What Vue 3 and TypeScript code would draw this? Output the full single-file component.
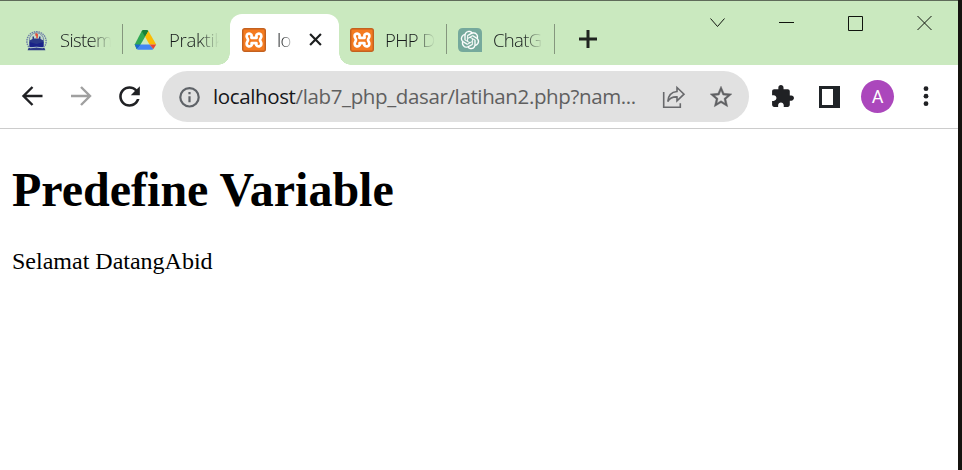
<script setup lang="ts">
type Icon = 'campus' | 'drive' | 'xampp' | 'chat'
interface Tab {
  title: string
  icon: Icon
  active?: boolean
  separator?: boolean
}

const tabs: Tab[] = [
  { title: 'Sistem', icon: 'campus', separator: true },
  { title: 'Praktik', icon: 'drive' },
  { title: 'lo', icon: 'xampp', active: true },
  { title: 'PHP D', icon: 'xampp', separator: true },
  { title: 'ChatG', icon: 'chat', separator: true },
]
</script>

<template>
  <div class="screen">
    <div class="window">
      <header class="strip">
        <div class="tabs">
          <div v-for="(tab, i) in tabs" :key="i" class="tab" :class="{ active: tab.active, separator: tab.separator }">
            <svg v-if="tab.icon === 'campus'" class="favicon" viewBox="0 0 24 24">
              <path d="M2.800 19A9.600 9.600 0 1 1 18.200 19" fill="none" stroke="#6878a8" stroke-width="1.400" stroke-dasharray="1.500 .8" />
              <circle cx="10.500" cy="12" r="7.200" fill="#c3dcc9" stroke="#6676a5" stroke-width=".8" />
              <path d="M3.500 12.500l3-1.500V8.500h1.500v2h5v-2h1.500V11l3 1.500v6h-14z" fill="#2a3888" />
              <path d="M9.800 4.800l2.300 1.500-.3 4h-1.600V8l-1.200-.8z" fill="#e0523f" />
              <path d="M3.500 14l7 2 7-2v5h-14z" fill="#1a2389" />
              <path d="M2.500 20q8-2 16 0l.9 2.200H1.600z" fill="#2c3a86" />
              <path d="M4 19.800q6.500-1.200 13 0" fill="none" stroke="#b9cfd0" stroke-width=".9" />
            </svg>
            <svg v-else-if="tab.icon === 'drive'" class="favicon" viewBox="0 0 24 24">
              <path d="M7.700 2.900h6.700L11.100 8.700 4.700 19.800 2.600 21.300.700 16.500z" fill="#30a853" />
              <path d="M7.700 2.900q.5-1 1.500-1h3.700q1 0 1.500 1l-3.300 5.800z" fill="#188038" />
              <path d="M14.400 2.900l7.800 13.600h-6.700L11.100 8.700z" fill="#fbbc04" />
              <path d="M6.600 16.500h8.900l3.900 4.600q-.5.600-1.400.6H4.200q-.9 0-1.500-.6z" fill="#4285f4" />
              <path d="M.700 16.500h5.900l-3.900 4.600z" fill="#1967d2" />
              <path d="M15.500 16.500h6.700l-2.800 4.600z" fill="#ea4335" />
            </svg>
            <svg v-else-if="tab.icon === 'xampp'" class="favicon" viewBox="0 0 24 24">
              <rect x=".7" y=".7" width="22.600" height="22.600" rx="2" fill="#f47b20" stroke="#c4611f" stroke-width="1.400" />
              <path d="M9.300 6.600C7.600 4.700 4.300 5.600 4.700 8.600 4.900 9.900 5.900 10.500 6 12 5.900 13.200 4.700 14 4.700 15.600 4.600 18.700 8.200 19.200 9.600 17.300V15.200H14.400V17.300C15.800 19.200 19.400 18.700 19.300 15.600 19.300 14 18.100 13.200 18 12 18.100 10.500 19.100 9.900 19.300 8.600 19.700 5.600 16.400 4.700 14.700 6.600 14 7.500 14.600 8.600 14.600 9.800H9.400C9.400 8.600 10 7.500 9.300 6.600Z" fill="none" stroke="#fff" stroke-width="2.700" stroke-linejoin="round" />
            </svg>
            <svg v-else class="favicon" viewBox="0 0 24 24">
              <path d="M5 0h14q5 0 5 5v19H5q-5 0-5-5V5q0-5 5-5z" fill="#75a99c" />
              <path transform="translate(2.800 2.800) scale(.765)" fill="#fff" stroke="#fff" stroke-width=".25" d="M22.2819 9.8211a5.9847 5.9847 0 0 0-.5157-4.9108 6.0462 6.0462 0 0 0-6.5098-2.9A6.0651 6.0651 0 0 0 4.9807 4.1818a5.9847 5.9847 0 0 0-3.9977 2.9 6.0462 6.0462 0 0 0 .7427 7.0966 5.98 5.98 0 0 0 .511 4.9107 6.051 6.051 0 0 0 6.5146 2.9001A5.9847 5.9847 0 0 0 13.2599 24a6.0557 6.0557 0 0 0 5.7718-4.2058 5.9894 5.9894 0 0 0 3.9977-2.9001 6.0557 6.0557 0 0 0-.7475-7.0729zm-9.022 12.6081a4.4755 4.4755 0 0 1-2.8764-1.0408l.1419-.0804 4.7783-2.7582a.7948.7948 0 0 0 .3927-.6813v-6.7369l2.02 1.1686a.071.071 0 0 1 .038.052v5.5826a4.504 4.504 0 0 1-4.4945 4.4944zm-9.6607-4.1254a4.4708 4.4708 0 0 1-.5346-3.0137l.142.0852 4.783 2.7582a.7712.7712 0 0 0 .7806 0l5.8428-3.3685v2.3324a.0804.0804 0 0 1-.0332.0615L9.74 19.9502a4.4992 4.4992 0 0 1-6.1408-1.6464zM2.3408 7.8956a4.485 4.485 0 0 1 2.3655-1.9728V11.6a.7664.7664 0 0 0 .3879.6765l5.8144 3.3543-2.0201 1.1685a.0757.0757 0 0 1-.071 0l-4.8303-2.7865A4.504 4.504 0 0 1 2.3408 7.872zm16.5963 3.8558L13.1038 8.364 15.1192 7.2a.0757.0757 0 0 1 .071 0l4.8303 2.7913a4.4944 4.4944 0 0 1-.6765 8.1042v-5.6772a.79.79 0 0 0-.407-.667zm2.0107-3.0231l-.142-.0852-4.7735-2.7818a.7759.7759 0 0 0-.7854 0L9.409 9.2297V6.8974a.0662.0662 0 0 1 .0284-.0615l4.8303-2.7866a4.4992 4.4992 0 0 1 6.6802 4.66zM8.3065 12.863l-2.02-1.1638a.0804.0804 0 0 1-.038-.0567V6.0742a4.4992 4.4992 0 0 1 7.3757-3.4537l-.142.0805L8.704 5.459a.7948.7948 0 0 0-.3927.6813zm1.0976-2.3654l2.602-1.4998 2.6069 1.4998v2.9994l-2.5974 1.4997-2.6067-1.4997Z" />
            </svg>
            <span class="title">{{ tab.title }}</span>
            <svg v-if="tab.active" class="close" viewBox="0 0 12 12"><path d="M1 1l10 10M11 1L1 11" /></svg>
          </div>
        </div>
        <svg class="plus" viewBox="0 0 18 18"><path d="M9 .5v17M.5 9h17" /></svg>
        <div class="controls">
          <svg viewBox="0 0 16 16"><path d="M.5 3.500L7.500 11.500 14.500 3.500" /></svg>
          <svg viewBox="0 0 16 16"><path d="M0 7.500h15" /></svg>
          <svg viewBox="0 0 16 16"><path d="M.5 1.500h14v14H.5z" /></svg>
          <svg viewBox="0 0 16 16"><path d="M.5 1L14.500 15M14.500 1L.5 15" /></svg>
        </div>
      </header>

      <nav class="toolbar">
        <svg class="nav-icon" viewBox="0 0 24 24"><path d="M21.500 11H3M11.500 2L2.500 11l9 9" /></svg>
        <svg class="nav-icon muted" viewBox="0 0 24 24"><path d="M2 11H20.500M12 2l9 9-9 9" /></svg>
        <svg class="reload" viewBox="0 0 24 24"><path d="M17.650 6.350C16.200 4.900 14.210 4 12 4c-4.420 0-7.990 3.580-7.990 8s3.570 8 7.990 8c3.730 0 6.840-2.550 7.730-6h-2.080c-.820 2.330-3.040 4-5.650 4-3.310 0-6-2.690-6-6s2.690-6 6-6c1.660 0 3.140.690 4.220 1.780L13 11h7V4l-2.350 2.350z" /></svg>
        <div class="omnibox">
          <svg class="info" viewBox="0 0 22 22">
            <circle cx="11.500" cy="11.300" r="9.200" />
            <path d="M11.500 10.300v6M11.500 6v2.300" />
          </svg>
          <div class="url"><span class="host">localhost</span>/lab7_php_dasar/latihan2.php?nam...</div>
          <svg class="share" viewBox="0 0 24 24">
            <path d="M1.700 7v15.200h16.600v-4" />
            <path d="M15 2.500l7 6.700-7 6.700v-4c-4.500-.2-7.300 1.200-9.200 4.600.4-6 3.600-9.500 9.200-10z" />
          </svg>
          <svg class="star" viewBox="0 0 24 24"><path d="M22 9.240l-7.190-.620L12 2 9.190 8.630 2 9.240l5.460 4.730L5.820 21 12 17.270 18.180 21l-1.630-7.030L22 9.240zM12 15.400l-3.760 2.270 1-4.280-3.320-2.880 4.380-.380L12 6.100l1.710 4.040 4.380.380-3.320 2.880 1 4.280L12 15.400z" /></svg>
        </div>
        <svg class="extensions" viewBox="0 0 24 24"><path d="M20.500 11H19V7c0-1.100-.9-2-2-2h-4V3.500C13 2.120 11.880 1 10.500 1S8 2.120 8 3.500V5H4c-1.100 0-1.990.9-1.990 2v3.800H3.500c1.490 0 2.700 1.210 2.700 2.700s-1.210 2.700-2.700 2.700H2V20c0 1.100.9 2 2 2h3.800v-1.500c0-1.490 1.210-2.700 2.700-2.700 1.490 0 2.700 1.210 2.700 2.700V22H17c1.100 0 2-.9 2-2v-4h1.500c1.380 0 2.500-1.120 2.500-2.500S21.880 11 20.500 11z" /></svg>
        <svg class="panel" viewBox="0 0 21 22"><path fill-rule="evenodd" d="M0 0h21v22H0zM3 3v16h11V3z" /></svg>
        <div class="avatar">A</div>
        <svg class="menu" viewBox="0 0 6 22"><circle cx="3" cy="2.700" r="2.400" /><circle cx="3" cy="10.200" r="2.400" /><circle cx="3" cy="17.700" r="2.400" /></svg>
      </nav>

      <main class="page">
        <h1>Predefine Variable</h1>
        <p>Selamat DatangAbid</p>
      </main>
    </div>
  </div>
</template>

<style>
body {
  margin: 0;
  overflow: hidden;
}
</style>

<style scoped>
.screen {
  box-sizing: border-box;
  width: 962px;
  height: 470px;
  padding-right: 4px;
  background: #15130f;
  overflow: hidden;
}
.window {
  height: 470px;
  background: #fff;
  font-family: "Open Sans", "Noto Sans", sans-serif;
}
svg {
  display: block;
  flex: none;
}
.strip {
  box-sizing: border-box;
  height: 65px;
  display: flex;
  padding-left: 14px;
  border-top: 1px solid #5f6b5a;
  background: #cae9bf;
}
.tabs {
  display: flex;
  padding-top: 13px;
}
.tab {
  position: relative;
  box-sizing: border-box;
  width: 108px;
  height: 51px;
  padding-left: 12px;
  display: flex;
  align-items: center;
}
.tab.separator::after {
  content: "";
  position: absolute;
  right: -1px;
  top: 10px;
  width: 1.5px;
  height: 30px;
  background: #85967e;
}
.tab.active {
  background: #fff;
  border-radius: 12px 12px 0 0;
  width: 109px;
  margin-right: -1px;
}
.tab.active::before,
.tab.active::after {
  content: "";
  position: absolute;
  bottom: 0;
  width: 12px;
  height: 12px;
}
.tab.active::before {
  left: -12px;
  background: radial-gradient(circle at 0 0, transparent 11.5px, #fff 12px);
}
.tab.active::after {
  right: -12px;
  background: radial-gradient(circle at 100% 0, transparent 11.5px, #fff 12px);
}
.favicon {
  width: 24px;
  height: 24px;
}
.title {
  width: 51px;
  margin-left: 10px;
  white-space: nowrap;
  font-size: 18.5px;
  font-weight: 350;
  line-height: 28px;
  letter-spacing: -0.65px;
  color: #15191a;
  -webkit-mask-image: linear-gradient(90deg, #000 calc(100% - 20px), transparent);
  mask-image: linear-gradient(90deg, #000 calc(100% - 20px), transparent);
}
.tab:nth-child(n + 2) .title {
  margin-left: 11px;
  width: 50px;
}
.tab:nth-child(2) .title {
  letter-spacing: -0.3px;
}
.tab.active:nth-child(n) .title {
  width: 16px;
  -webkit-mask-image: linear-gradient(90deg, #000 4px, transparent 18px);
  mask-image: linear-gradient(90deg, #000 4px, transparent 18px);
}
.close {
  width: 13px;
  height: 13px;
  margin-left: 16px;
}
.close path {
  fill: none;
  stroke: #1c1e1f;
  stroke-width: 2;
}
.plus {
  width: 18px;
  height: 18px;
  margin: 29px 0 0 25px;
}
.plus path {
  fill: none;
  stroke: #202420;
  stroke-width: 3;
  stroke-linecap: round;
}
.controls {
  display: flex;
  margin-left: auto;
  padding: 14px 25px 0 0;
  gap: 53px;
}
.controls svg {
  width: 16px;
  height: 16px;
}
.controls path {
  fill: none;
  stroke: #10150e;
  stroke-width: 1;
}
.toolbar {
  box-sizing: border-box;
  height: 64px;
  display: flex;
  align-items: center;
  padding-left: 21px;
  border-bottom: 1px solid #ccc;
}
.nav-icon {
  width: 24px;
  height: 24px;
  margin-right: 24px;
}
.nav-icon path {
  fill: none;
  stroke: #202124;
  stroke-width: 2.4;
}
.nav-icon.muted path {
  stroke: #a0a0a0;
}
.reload {
  width: 31px;
  height: 31px;
  margin-left: -3px;
  fill: #202124;
}
.omnibox {
  box-sizing: border-box;
  width: 587px;
  height: 51px;
  margin-left: 17px;
  padding-left: 16px;
  display: flex;
  align-items: center;
  border-radius: 26px;
  background: #e1e1e1;
}
.info {
  width: 22px;
  height: 22px;
}
.info circle,
.info path {
  fill: none;
  stroke: #5f6368;
  stroke-width: 2.2;
}
.url {
  width: 436px;
  margin-left: 13px;
  padding-bottom: 1px;
  white-space: nowrap;
  font-size: 20.5px;
  line-height: 30px;
  letter-spacing: -0.37px;
  color: #5f5f5f;
}
.host {
  color: #15161a;
}
.share {
  width: 24px;
  height: 24px;
  margin-left: 13px;
}
.share path {
  fill: none;
  stroke: #68696c;
  stroke-width: 1.6;
}
.star {
  width: 26px;
  height: 26px;
  margin-left: 22px;
  fill: #5f6063;
  stroke: #5f6063;
  stroke-width: 0.4;
}
.extensions {
  width: 25px;
  height: 25px;
  margin-left: 21px;
  fill: #202124;
}
.panel {
  width: 21px;
  height: 22px;
  margin-left: 24px;
  fill: #202428;
}
.avatar {
  width: 33px;
  height: 33px;
  margin-left: 21px;
  border-radius: 50%;
  background: #ab47bc;
  color: #fff;
  font-family: Roboto, sans-serif;
  font-size: 18px;
  line-height: 34px;
  text-align: center;
}
.menu {
  width: 6px;
  height: 22px;
  margin-left: 29px;
  fill: #202124;
}
.page {
  padding: 33px 12px 0;
  font-family: "Liberation Serif", "Times New Roman", serif;
  color: #000;
}
h1 {
  margin: 0;
  font-size: 48px;
  line-height: 56px;
}
p {
  margin: 29px 0 0;
  font-size: 24px;
  line-height: 28px;
}
</style>
